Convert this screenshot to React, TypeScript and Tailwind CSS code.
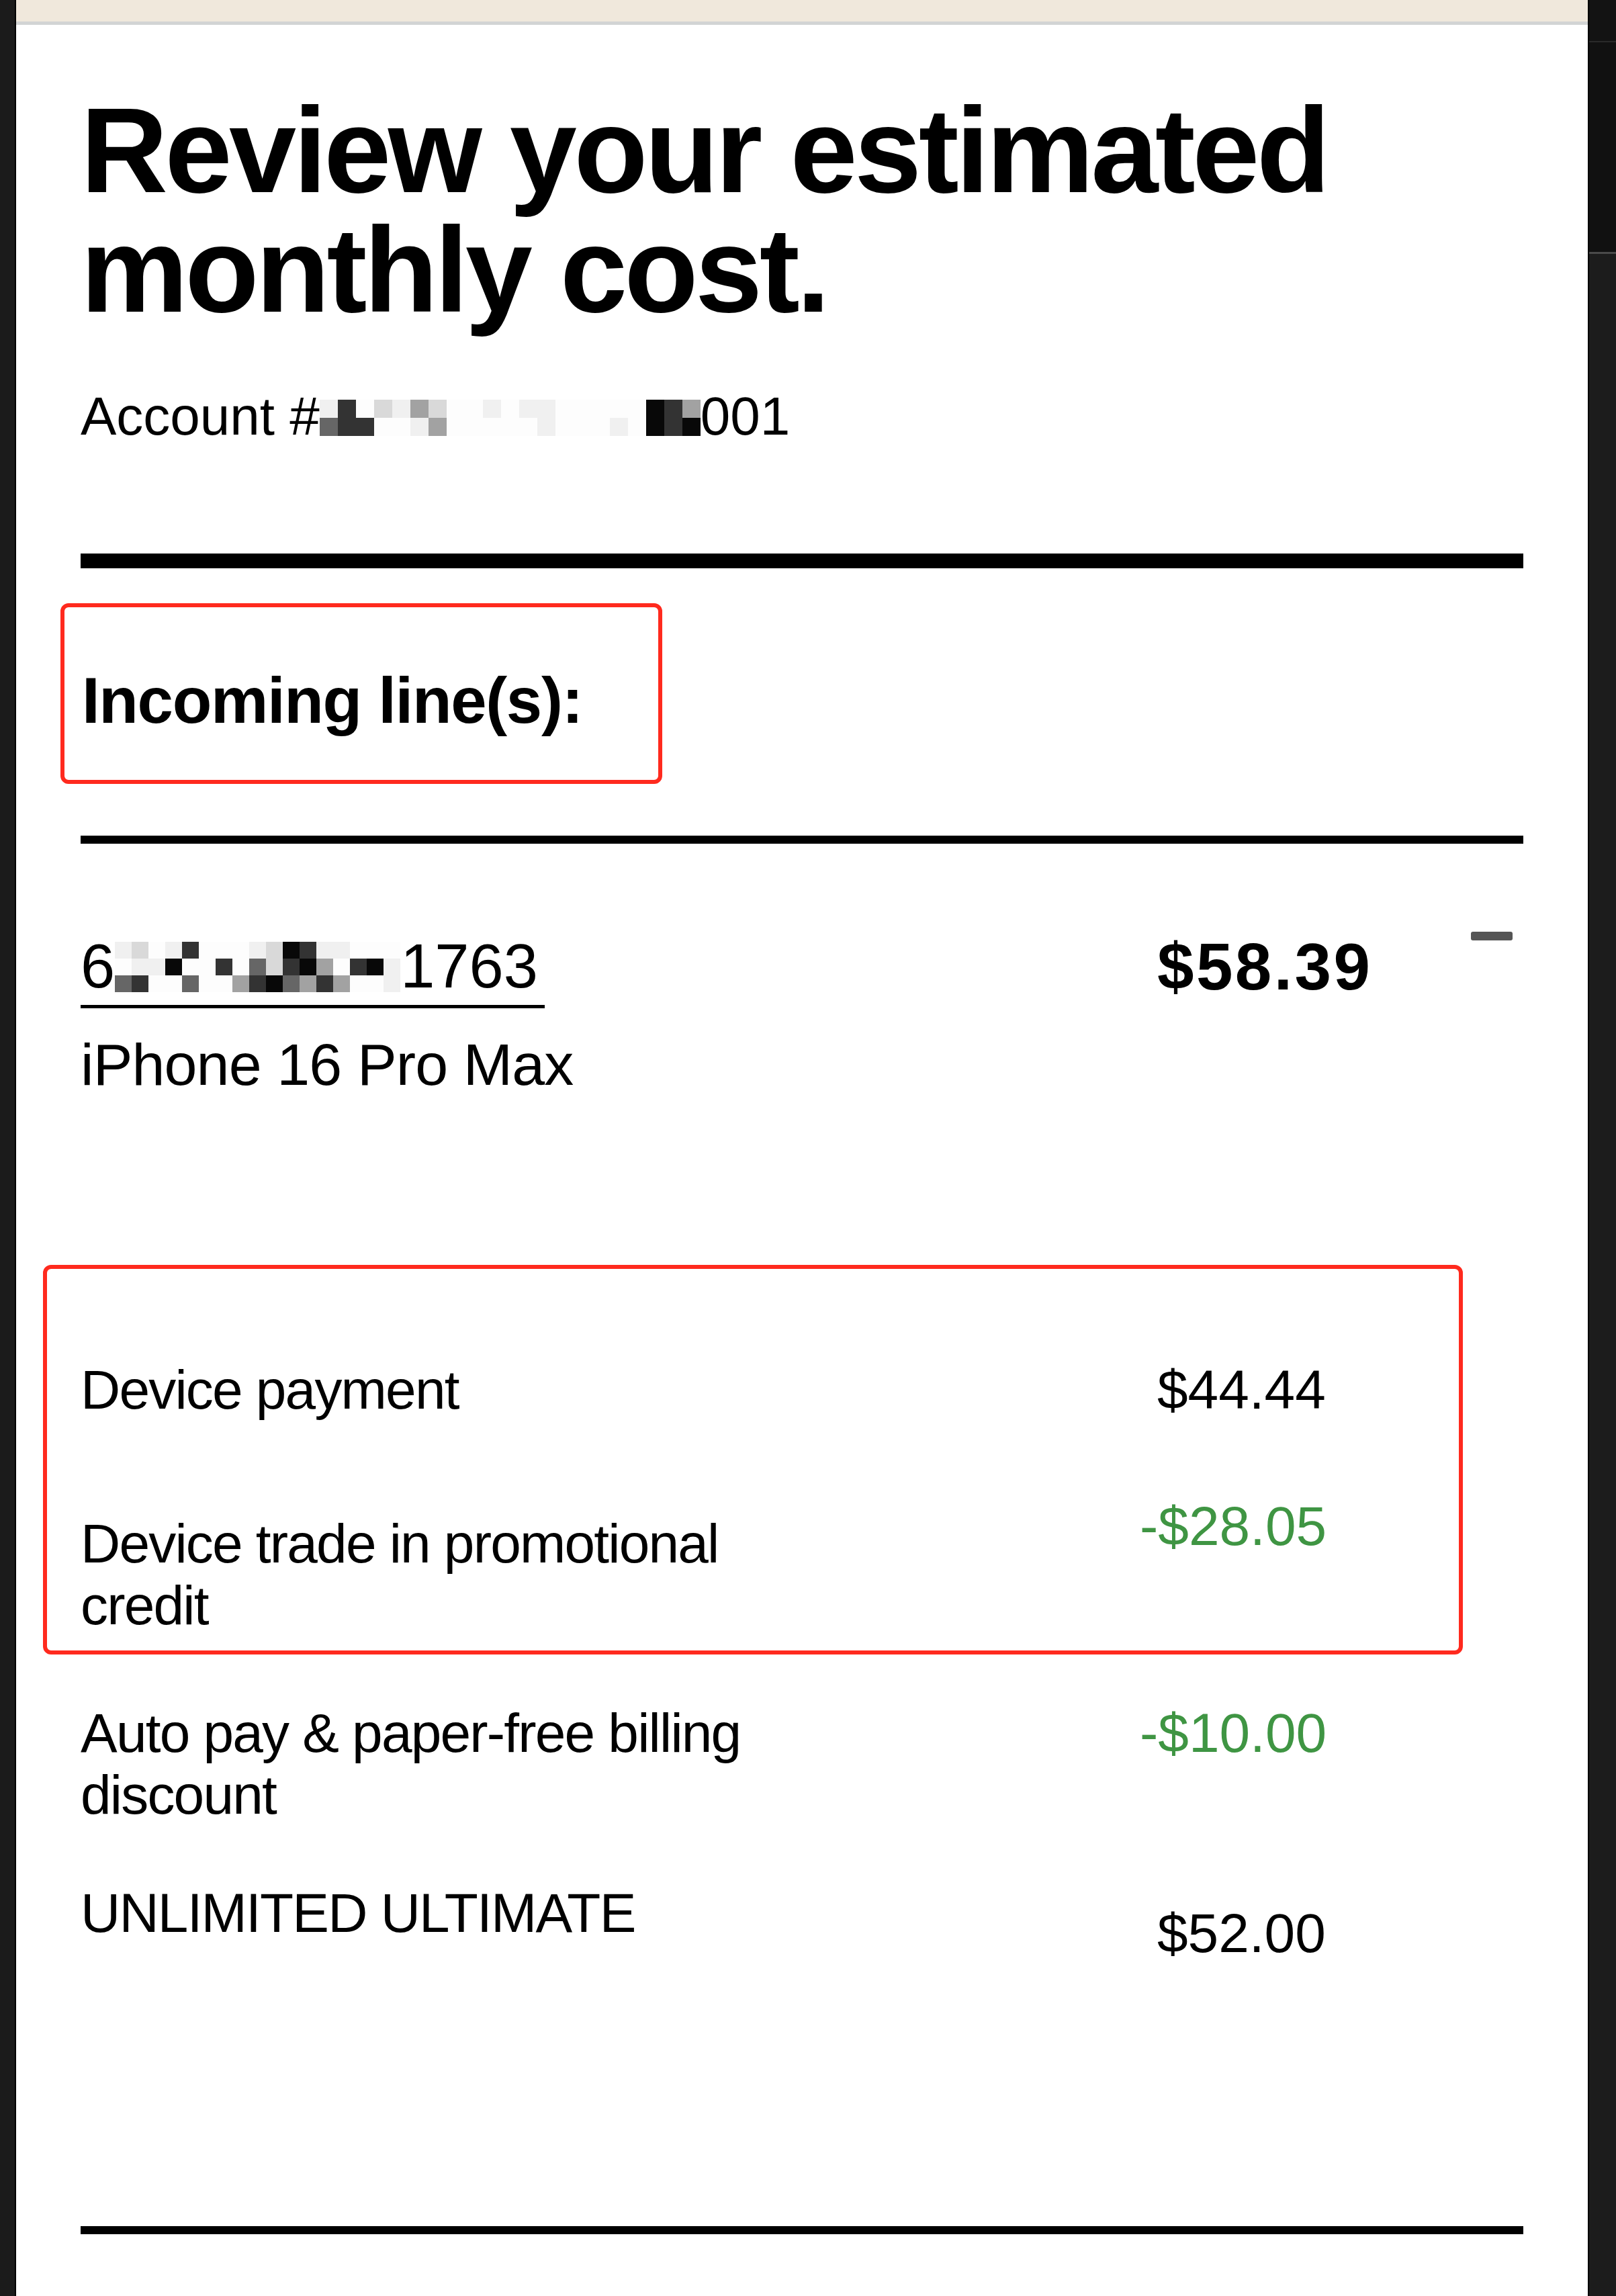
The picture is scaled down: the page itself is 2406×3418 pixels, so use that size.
const shades: Record<string, string> = {
  "0": "#fdfdfd",
  "1": "#f0f0f0",
  "2": "#d9d9d9",
  "3": "#a2a2a2",
  "4": "#666666",
  "5": "#333333",
  "6": "#080808",
};

// pixelated redaction blocks from the screenshot
function Mosaic({ rows, cell, className }: { rows: string[]; cell: number; className?: string }) {
  const w = rows[0].length * cell;
  const h = rows.length * cell;
  return (
    <svg width={w} height={h} viewBox={`0 0 ${w} ${h}`} className={`inline-block ${className ?? ""}`}>
      {rows.map((row, y) =>
        row.split("").map((c, x) => (
          <rect key={`${x}-${y}`} x={x * cell} y={y * cell} width={cell} height={cell} fill={shades[c]} />
        ))
      )}
    </svg>
  );
}

function LineItem({
  label,
  amount,
  credit,
  amountClass,
  className,
}: {
  label: string;
  amount: string;
  credit?: boolean;
  amountClass?: string;
  className?: string;
}) {
  return (
    <div className={`grid grid-cols-[1603px_1fr] text-[82px] leading-[92px] ${className ?? ""}`}>
      <p className="max-w-[1100px] tracking-[-0.022em]">{label}</p>
      <p className={`${credit ? "-ml-[26px] text-[#3f9543]" : ""} ${amountClass ?? ""}`}>{amount}</p>
    </div>
  );
}

export default function App() {
  return (
    <div className="flex min-h-screen bg-[#1b1b1b] font-['Liberation_Sans',Arial,sans-serif] text-black">
      <div className="w-[22px] shrink-0 bg-[#1b1b1b]" />
      <div className="w-[2px] shrink-0 bg-black" />

      <main className="min-h-[3418px] w-[2340px] shrink-0 bg-white">
        <div className="h-[32px] bg-[#f0e8dc]" />
        <div className="h-[5px] bg-[#d2d4d4]" />

        <div className="px-[96px]">
          <h1 className="mt-[98px] text-[180px] font-bold leading-[178px] tracking-[-0.025em]">
            Review your estimated monthly cost.
          </h1>

          <p className="mt-[81px] text-[80px] leading-[96px]">
            Account #
            <Mosaic
              cell={27}
              className="align-[-2px]"
              rows={["150213200101100000653", "455001300000100010656"]}
            />
            001
          </p>

          <div className="mt-[156px] h-[22px] bg-black" />

          {/* Incoming lines heading (annotated) */}
          <div className="mt-[52px] -ml-[30px] h-[269px] w-[896px] rounded-[12px] border-[6px] border-[#ff2a1e] pl-[26px] pt-[81px]">
            <h2 className="text-[96px] font-bold leading-[115px] tracking-[-0.014em]">Incoming line(s):</h2>
          </div>

          <div className="mt-[77px] h-[12px] bg-black" />

          {/* Line summary */}
          <div className="mt-[127px] flex">
            <div className="w-[1603px] shrink-0">
              <div>
                <span className="inline-block border-b-[5px] border-black pb-[3px] pr-[10px] text-[92px] leading-[110px]">
                  6
                  <Mosaic
                    cell={25}
                    className="align-[-7px]"
                    rows={["12015000126511000", "01160050425630561", "45004003564353001"]}
                  />
                  1763
                </span>
              </div>
              <p className="mt-[31px] text-[88px] leading-[106px] tracking-[-0.01em]">iPhone 16 Pro Max</p>
            </div>
            <p className="text-[98px] font-bold leading-[113px] tracking-[0.035em]">$58.39</p>
            <div className="ml-auto mr-[16px] mt-[4px] h-[13px] w-[62px] rounded-[3px] bg-[#555555]" />
          </div>

          {/* Device charges (annotated) */}
          <div className="mt-[245px] -ml-[56px] w-[2114px] rounded-[12px] border-[6px] border-[#ff2a1e] pb-[21px] pl-[50px] pt-[134px]">
            <LineItem label="Device payment" amount="$44.44" />
            <LineItem
              className="mt-[137px]"
              label="Device trade in promotional credit"
              amount="-$28.05"
              credit
              amountClass="-mt-[26px]"
            />
          </div>

          <LineItem className="mt-[71px]" label="Auto pay & paper-free billing discount" amount="-$10.00" credit />
          <LineItem className="mt-[84px]" label="UNLIMITED ULTIMATE" amount="$52.00" amountClass="mt-[30px]" />

          <div className="mt-[390px] h-[12px] bg-black" />
        </div>
      </main>

      <div className="flex w-[42px] shrink-0">
        <div className="w-[2px] bg-black" />
        <div className="flex flex-1 flex-col">
          <div className="h-[61px] bg-[#131313]" />
          <div className="h-[2px] bg-[#2a2a2a]" />
          <div className="h-[312px] bg-[#111111]" />
          <div className="h-[3px] bg-[#4a4a4a]" />
          <div className="flex-1 bg-[#1c1c1c]" />
        </div>
      </div>
    </div>
  );
}
